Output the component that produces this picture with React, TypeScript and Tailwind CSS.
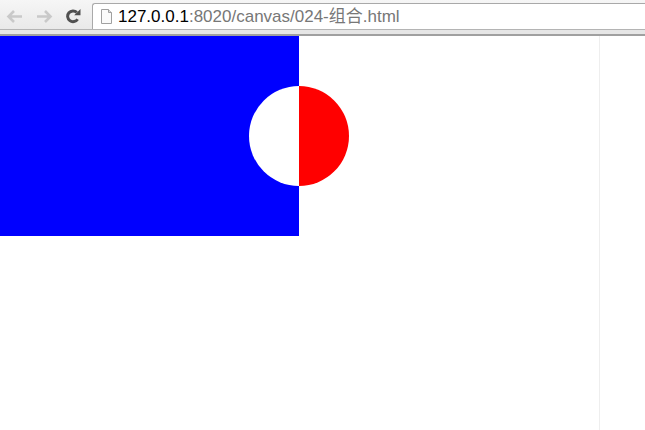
const font = { fontFamily: '"Liberation Sans", "Noto Sans CJK SC", sans-serif' }

function PageIcon() {
  return (
    <svg width="13" height="17" viewBox="0 0 13 17" fill="none">
      <path d="M1.5 1.5h7l3 3v11h-10z" fill="#fafafa" stroke="#a0a0a0" />
      <path d="M8.5 1.5v3h3" fill="#dddddd" stroke="#a0a0a0" />
    </svg>
  )
}

function NavArrow({ flip }: { flip?: boolean }) {
  return (
    <svg width="17" height="15" viewBox="0 0 17 15" fill="none" className={flip ? '-scale-x-100' : ''}>
      <path d="M8 2 2.5 7.5 8 13M3 7.5h13" stroke="#c9c9c9" strokeWidth="2.6" />
    </svg>
  )
}

function ReloadIcon() {
  return (
    <svg width="15" height="15" viewBox="0 0 15 15" fill="none">
      <path d="M11.6 10.2A5.4 5.4 0 1 1 10.8 3.4" stroke="#505050" strokeWidth="3" />
      <path d="M8.2 6.2h6.3V0z" fill="#505050" />
    </svg>
  )
}

function Toolbar() {
  return (
    <div className="flex h-[36px] flex-col bg-[#f2f2f2]">
      <div className="flex h-[29px] items-start bg-gradient-to-b from-[#f6f6f6] to-[#e9e9e9]">
        <div className="flex h-[29px] w-[92px] items-center pl-[6px] pt-[3px]">
          <NavArrow />
          <span className="ml-[13px] flex"><NavArrow flip /></span>
          <span className="ml-[13px] flex"><ReloadIcon /></span>
        </div>
        <div className="mt-[3px] flex h-[26px] flex-1 items-center rounded-tl-[3px] border-t border-l border-[#a9a9a9] bg-white pl-[7px]">
          <PageIcon />
          <span className="ml-[5px] whitespace-nowrap pt-[1px] text-[17px] text-[#777777]" style={font}>
            <span className="text-black">127.0.0.1</span>:8020/canvas/024-组合.html
          </span>
        </div>
      </div>
      <div className="h-[5px] border-t border-[#b4b4b4] bg-[#e6e6e6]" />
      <div className="h-[2px] bg-[#a0a0a0]" />
    </div>
  )
}

function CanvasDrawing() {
  return (
    <svg width="599" height="394" viewBox="0 0 599 394" className="block">
      <rect x="0" y="0" width="299" height="200" fill="#0000ff" />
      <path d="M299 50a50 50 0 0 0 0 100z" fill="#fff" />
      <path d="M299 50a50 50 0 0 1 0 100z" fill="#ff0000" />
    </svg>
  )
}

export default function App() {
  return (
    <div className="h-[430px] w-[645px] overflow-hidden bg-white">
      <Toolbar />
      <div className="flex h-[394px]">
        <div className="w-[600px] border-r border-[#eeeeee]">
          <CanvasDrawing />
        </div>
      </div>
    </div>
  )
}
